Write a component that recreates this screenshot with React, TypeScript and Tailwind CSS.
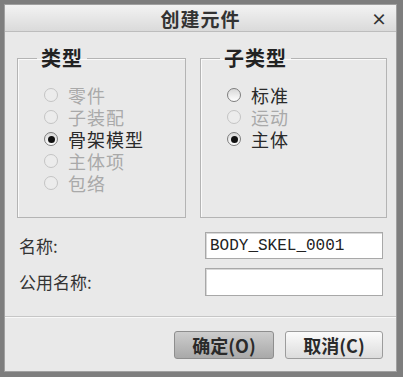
const font = "font-['Noto_Sans_CJK_SC','Noto_Sans',sans-serif]";

type RadioProps = { label: string; checked?: boolean; disabled?: boolean };

function Radio({ label, checked, disabled }: RadioProps) {
  return (
    <div className="flex h-[22px] items-center gap-[10px]">
      <span
        className={`flex h-[14px] w-[14px] shrink-0 items-center justify-center rounded-full border ${
          disabled
            ? "border-[#c4c4c4] bg-[#ececec]"
            : "border-[#7d7d7d] bg-gradient-to-b from-[#d8d8d8] to-white"
        }`}
      >
        {checked && <span className="h-[7px] w-[7px] rounded-full bg-[#111]" />}
      </span>
      <span
        className={`text-[18px] leading-[20px] tracking-[1px] ${
          disabled ? "text-[#a9a9a9]" : "text-[#2a2a2a]"
        }`}
      >
        {label}
      </span>
    </div>
  );
}

function Group({
  title,
  width,
  children,
}: {
  title: string;
  width: string;
  children: React.ReactNode;
}) {
  return (
    <fieldset
      className={`${width} h-[170px] border border-[#b4b4b4] pl-[26px] pt-[16px] shadow-[inset_1px_1px_0_#fafafa]`}
    >
      <legend className="-ml-[7px] px-[4px] text-[20px] leading-[20px] font-bold tracking-[1px] text-[#222]">
        {title}
      </legend>
      <div className="flex flex-col">{children}</div>
    </fieldset>
  );
}

export default function App() {
  return (
    <div className={`${font} h-[377px] w-[403px] bg-[#7e7e7e] pt-[4px] pr-[6px] pb-[5px] pl-[4px]`}>
      <div className="flex h-full flex-col border border-[#a0a0a0] bg-[#e9e9e9]">
        {/* title bar */}
        <div className="relative flex h-[27px] items-center justify-center border-b border-[#bdbdbd] bg-gradient-to-b from-[#f3f3f3] to-[#dadada]">
          <span className="text-[19px] leading-none font-bold tracking-[1px] text-[#333]">创建元件</span>
          <span className="absolute right-[9px] top-[5px] text-[16px] leading-none font-bold text-[#333]">
            ×
          </span>
        </div>

        {/* groups */}
        <div className="mt-[16px] flex gap-[14px] pl-[12px]">
          <Group title="类型" width="w-[169px]">
            <Radio label="零件" disabled />
            <Radio label="子装配" disabled />
            <Radio label="骨架模型" checked />
            <Radio label="主体项" disabled />
            <Radio label="包络" disabled />
          </Group>
          <Group title="子类型" width="w-[187px]">
            <Radio label="标准" />
            <Radio label="运动" disabled />
            <Radio label="主体" checked />
          </Group>
        </div>

        {/* fields */}
        <div className="mt-[14px] flex flex-col gap-[9px] pl-[14px] pr-[13px] text-[17px] text-[#333]">
          <div className="flex h-[27px] items-center justify-between">
            <span>名称:</span>
            <div className="flex h-[27px] w-[178px] items-center border border-[#a8a8a8] bg-white pl-[4px] font-['Liberation_Mono',monospace] text-[16px] text-[#222] shadow-[inset_1px_1px_0_#d8d8d8]">
              BODY_SKEL_0001
            </div>
          </div>
          <div className="flex h-[28px] items-center justify-between">
            <span>公用名称:</span>
            <div className="h-[28px] w-[178px] border border-[#a8a8a8] bg-white shadow-[inset_1px_1px_0_#d8d8d8]" />
          </div>
        </div>

        {/* footer */}
        <div className="mt-[20px] flex flex-1 items-start justify-end gap-[11px] border-t border-[#c6c6c6] pt-[14px] pr-[13px] shadow-[inset_0_1px_0_#f8f8f8]">
          <button className="h-[28px] w-[100px] rounded-[3px] border border-[#8e8e8e] bg-gradient-to-b from-[#cdcdcd] to-[#a9a9a9] text-[18px] font-bold text-[#2a2a2a]">
            确定(O)
          </button>
          <button className="h-[28px] w-[98px] rounded-[3px] border border-[#9c9c9c] bg-gradient-to-b from-[#fbfbfb] to-[#dcdcdc] text-[18px] font-bold text-[#2a2a2a]">
            取消(C)
          </button>
        </div>
      </div>
    </div>
  );
}
